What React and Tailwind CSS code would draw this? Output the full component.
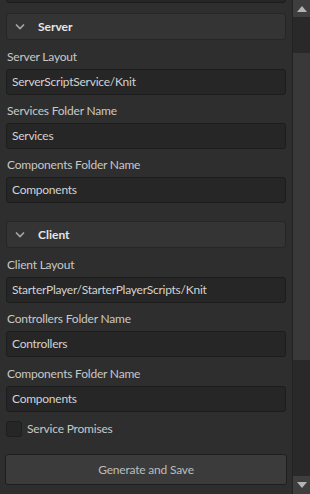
import React from "react";

const FONT = { fontFamily: "Lato, 'Noto Sans', sans-serif" };

const Input = ({ value, className = "" }) => (
  <div className={`h-[26px] rounded-[3px] border border-[#1c1c1c] bg-[#262626] flex items-center px-[5px] text-[12px] tracking-[-0.25px] text-[#d2d2d2] ${className}`}>
    {value}
  </div>
);

const Label = ({ children, className = "" }) => (
  <div className={`pt-[9px] pb-[5px] leading-[14px] px-[1px] text-[12px] tracking-[-0.2px] text-[#c8c8c8] ${className}`}>{children}</div>
);

const Header = ({ title, className = "" }) => (
  <div className={`h-[27px] rounded-[3px] border border-[#262626] bg-[#343434] flex items-center ${className}`}>
    <svg width="10" height="7" viewBox="0 0 10 7" className="ml-[8px] mr-[13px]">
      <path d="M1 1.5 L5 5.5 L9 1.5" fill="none" stroke="#a8a8a8" strokeWidth="1.6" />
    </svg>
    <span className="text-[12px] font-bold text-[#e6e6e6]">{title}</span>
  </div>
);

export default function App() {
  return (
    <div className="w-[310px] h-[494px] flex overflow-hidden bg-[#2e2e2e]" style={FONT}>
      <div className="w-[292px] flex flex-col pl-[6px] pr-[6px]">
        <Input value="" className="-mt-[23px] shrink-0" />

        <Header title="Server" className="mt-[10px]" />
        <Label className="pt-[10px]">Server Layout</Label>
        <Input value="ServerScriptService/Knit" />
        <Label>Services Folder Name</Label>
        <Input value="Services" />
        <Label>Components Folder Name</Label>
        <Input value="Components" />

        <Header title="Client" className="mt-[18px]" />
        <Label className="pt-[10px]">Client Layout</Label>
        <Input value="StarterPlayer/StarterPlayerScripts/Knit" />
        <Label>Controllers Folder Name</Label>
        <Input value="Controllers" />
        <Label className="pt-[10px]">Components Folder Name</Label>
        <Input value="Components" />

        <div className="mt-[9px] flex items-center h-[16px]">
          <div className="w-[16px] h-[16px] rounded-[3px] border border-[#1e1e1e] bg-[#262626]" />
          <span className="ml-[5px] text-[12px] tracking-[-0.2px] text-[#c8c8c8]">Service Promises</span>
        </div>

        <div className="mt-[17px] -mx-[1px] h-[31px] rounded-[3px] border border-[#1e1e1e] bg-[#3b3b3b] flex items-center justify-center text-[12px] tracking-[-0.2px] text-[#bdbdbd] shrink-0">
          Generate and Save
        </div>
      </div>

      <div className="w-[18px] flex flex-col border-l border-[#222222] bg-[#292929]">
        <div className="h-[17px] bg-[#3e3e3e] flex items-center justify-center shrink-0">
          <svg width="10" height="6" viewBox="0 0 10 6">
            <path d="M5 0 L10 6 L0 6 Z" fill="#b4b4b4" />
          </svg>
        </div>
        <div className="h-[36px] shrink-0" />
        <div className="h-[307px] bg-[#393939] shrink-0" />
        <div className="flex-1" />
        <div className="h-[18px] bg-[#3e3e3e] flex items-center justify-center shrink-0">
          <svg width="10" height="6" viewBox="0 0 10 6">
            <path d="M0 0 L10 0 L5 6 Z" fill="#b4b4b4" />
          </svg>
        </div>
      </div>
    </div>
  );
}
